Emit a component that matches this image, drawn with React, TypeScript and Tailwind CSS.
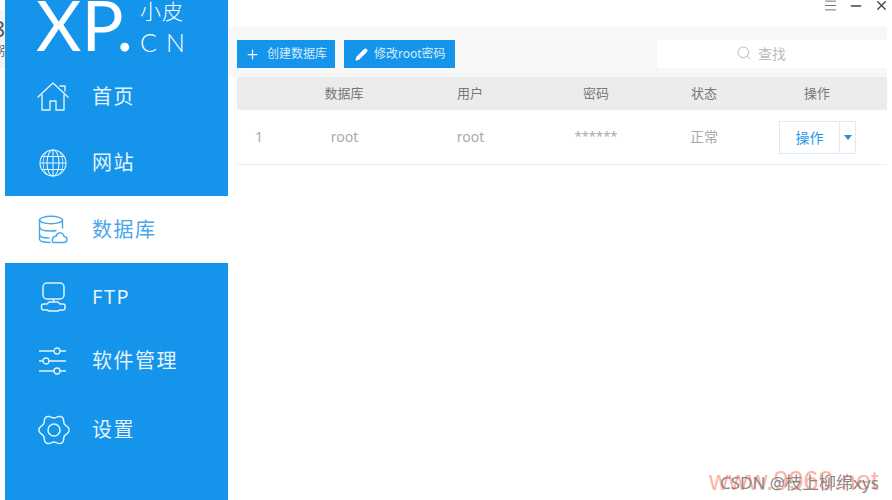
import React from 'react';
import { Plus, Pencil, Search, Menu, Minus, X } from 'lucide-react';

const HomeIcon = () => (
  <svg width="32" height="30" viewBox="0 0 32 30" fill="none" stroke="currentColor" strokeWidth="1.4" strokeLinejoin="round" strokeLinecap="round">
    <path d="M1 15 L16 1 L31 15" />
    <path d="M23 4 L28 4 L28 9" />
    <path d="M5 13 V28 H13 V19 H19 V28 H27 V13" />
  </svg>
);

const GlobeIcon = () => (
  <svg width="28" height="28" viewBox="0 0 28 28" fill="none" stroke="currentColor" strokeWidth="1.1">
    <circle cx="14" cy="14" r="13" />
    <ellipse cx="14" cy="14" rx="6" ry="13" />
    <path d="M14 1 V27 M1 14 H27 M3 7.5 H25 M3 20.5 H25" />
    <path d="M7.5 3 C3 9 3 19 7.5 25 M20.5 3 C25 9 25 19 20.5 25" strokeWidth="0.8" />
  </svg>
);

const DbIcon = () => (
  <svg width="30" height="30" viewBox="0 0 30 30" fill="none" stroke="currentColor" strokeWidth="1.4" strokeLinecap="round" strokeLinejoin="round">
    <ellipse cx="13" cy="5" rx="11.5" ry="3.8" />
    <path d="M1.5 5 V24 C1.5 26.5 6 27.5 12 27.5" />
    <path d="M24.5 5 V13" />
    <path d="M1.5 12 C1.5 15 7 16 13 16 C15 16 17 15.8 18 15.5" />
    <path d="M1.5 19.5 C1.5 22 6 23 11 23" />
    <path d="M15 27.5 H26 C30 27.5 30 21.5 26 21.5 C25.5 17 19 16.5 18.5 21 C14 20.5 13.5 27.5 15 27.5 Z" />
  </svg>
);

const FtpIcon = () => (
  <svg width="26" height="30" viewBox="0 0 26 30" fill="none" stroke="currentColor" strokeWidth="1.5" strokeLinejoin="round">
    <rect x="3" y="1" width="21" height="16" rx="4" />
    <path d="M13.5 17 V20" />
    <path d="M9 20 H18 L20 22 H23 Q25 22 25 24 V26 Q25 28 23 28 H20 L18 29 H9 L7 28 H4 Q1.5 28 1.5 26 V24 Q1.5 22 4 22 H7 Z" />
  </svg>
);

const SlidersIcon = () => (
  <svg width="28" height="28" viewBox="0 0 28 28" fill="none" stroke="currentColor" strokeWidth="1.3">
    <path d="M0 4 H15 M21 4 H27 M0 14 H4 M10 14 H27 M0 24 H15 M21 24 H27" />
    <circle cx="18" cy="4" r="3" />
    <circle cx="7" cy="14" r="3" />
    <circle cx="18" cy="24" r="3" />
  </svg>
);

// six rounded lobes
const gearPath = Array.from({ length: 73 }, (_, i) => {
  const a = (i / 72) * Math.PI * 2;
  const r = 13.6 + 1.6 * Math.cos(6 * a);
  return `${i === 0 ? 'M' : 'L'}${(16 + r * Math.cos(a)).toFixed(2)} ${(16 + r * Math.sin(a)).toFixed(2)}`;
}).join(' ');

const GearIcon = () => (
  <svg width="32" height="32" viewBox="0 0 32 32" fill="none" stroke="currentColor" strokeWidth="1.5" className="ml-[1px]">
    <path d={gearPath} />
    <circle cx="16" cy="16" r="6" />
  </svg>
);

const navItems = [
  { label: '首页', icon: <HomeIcon />, h: 'h-[67px]' },
  { label: '网站', icon: <GlobeIcon />, h: 'h-[66px]' },
  { label: '数据库', icon: <DbIcon />, h: 'h-[67px]', active: true },
  { label: 'FTP', icon: <FtpIcon />, h: 'h-[67px]' },
  { label: '软件管理', icon: <SlidersIcon />, h: 'h-[62px]' },
  { label: '设置', icon: <GearIcon />, h: 'h-[76px]' },
];

const cols = 'grid grid-cols-[44px_126px_126px_126px_90px_136px] items-center text-center';

export default function App() {
  return (
    <div className="relative flex h-[500px] w-[892px] overflow-hidden bg-white font-['Noto_Sans','Noto_Sans_CJK_SC',sans-serif]">
      {/* bit of the window behind */}
      <div className="w-[5px] shrink-0 pt-[10px]">
        <div className="flex h-[58px] flex-col items-end overflow-hidden bg-[#f4f4f4] text-[#555]">
          <span className="mt-[4px] text-[22px] leading-[28px]">8</span>
          <span className="mt-[2px] text-[12px] leading-[16px]">粥</span>
        </div>
      </div>

      <aside className="h-full w-[223px] shrink-0 overflow-hidden bg-[#1494ea] text-white">
        <div className="flex h-[63px] items-start overflow-hidden pl-[31px]">
          <span className="mt-[-26px] w-[104px] shrink-0 font-['Lato',sans-serif] text-[70px] leading-[100px]">XP.</span>
          <div className="flex flex-col font-light">
            <span className="mt-[-4px] text-[21px] leading-[30px] tracking-[1px]">小皮</span>
            <span className="mt-[3px] font-['Lato',sans-serif] text-[25px] leading-[26px] tracking-[9px]">CN</span>
          </div>
        </div>
        {navItems.map(item => (
          <div
            key={item.label}
            className={`flex items-center ${item.h} ${item.active ? 'bg-white text-[#4aa6ea]' : 'text-[#e4f3fd]'}`}
          >
            <span className="flex w-[87px] justify-center pl-[9px]">{item.icon}</span>
            <span className="text-[20px] tracking-[1.5px]">{item.label}</span>
          </div>
        ))}
      </aside>

      <main className="flex min-w-0 flex-1 flex-col">
        <div className="flex h-[27px] items-start justify-end text-[#444]">
          <Menu size={15} strokeWidth={1.2} className="mr-[10px] mt-[-2px]" />
          <Minus size={16} strokeWidth={2} className="mr-[10px] mt-[-2px]" />
          <X size={15} strokeWidth={2.2} className="mr-[3px] mt-[-2px]" />
        </div>

        <div className="mr-[5px] flex h-[50px] items-start bg-[#f7f7f7] pl-[9px] pt-[13px]">
          <button className="flex h-[28px] w-[98px] items-center bg-[#1494ea] pl-[8px] text-[12px] text-[#d6edfc]">
            <Plus size={15} strokeWidth={2} className="mr-[7px] text-white" />
            创建数据库
          </button>
          <button className="ml-[9px] flex h-[28px] w-[111px] items-center bg-[#1494ea] pl-[11px] text-[12px] text-[#d6edfc]">
            <Pencil size={13} strokeWidth={2} fill="currentColor" className="mr-[6px] text-white" />
            修改root密码
          </button>
          <div className="ml-auto flex h-[28px] w-[230px] items-center justify-center bg-white pb-[2px] pr-[22px] text-[14px] text-[#bbb]">
            <Search size={16} strokeWidth={1.5} className="mr-[6px]" />
            查找
          </div>
        </div>

        <div className="ml-[9px] mr-[5px]">
          <div className={`${cols} h-[33px] bg-[#ececec] text-[13px] text-[#777]`}>
            <span />
            <span>数据库</span>
            <span>用户</span>
            <span>密码</span>
            <span>状态</span>
            <span>操作</span>
          </div>
          <div className={`${cols} h-[55px] border-b border-[#eeeeee] text-[14px] text-[#aaa]`}>
            <span className="mb-[2px]">1</span>
            <span className="mb-[2px] pl-[1px]">root</span>
            <span className="mb-[2px] pl-[1px]">root</span>
            <span className="text-[13px]">******</span>
            <span className="mb-[2px]">正常</span>
            <div className="flex justify-center">
              <div className="ml-[1px] flex h-[33px] w-[77px] items-center border border-[#d8ecfb] text-[14px] text-[#1f9bec]">
                <span className="flex h-full w-[60px] items-center justify-center border-r border-[#d8ecfb]">操作</span>
                <span className="flex flex-1 justify-center">
                  <span className="h-0 w-0 border-x-[4px] border-t-[5px] border-x-transparent border-t-[#1f8fe0]" />
                </span>
              </div>
            </div>
          </div>
        </div>
      </main>

      {/* image watermarks */}
      <span className="absolute left-[709px] top-[466px] font-['Liberation_Sans',sans-serif] text-[27px] leading-[30px] text-[#ffb3a6]">www.9969.net</span>
      <span className="absolute left-[720px] top-[472px] text-[17px] leading-[22px] text-[#888]">CSDN @枝上柳绵xys</span>
    </div>
  );
}
